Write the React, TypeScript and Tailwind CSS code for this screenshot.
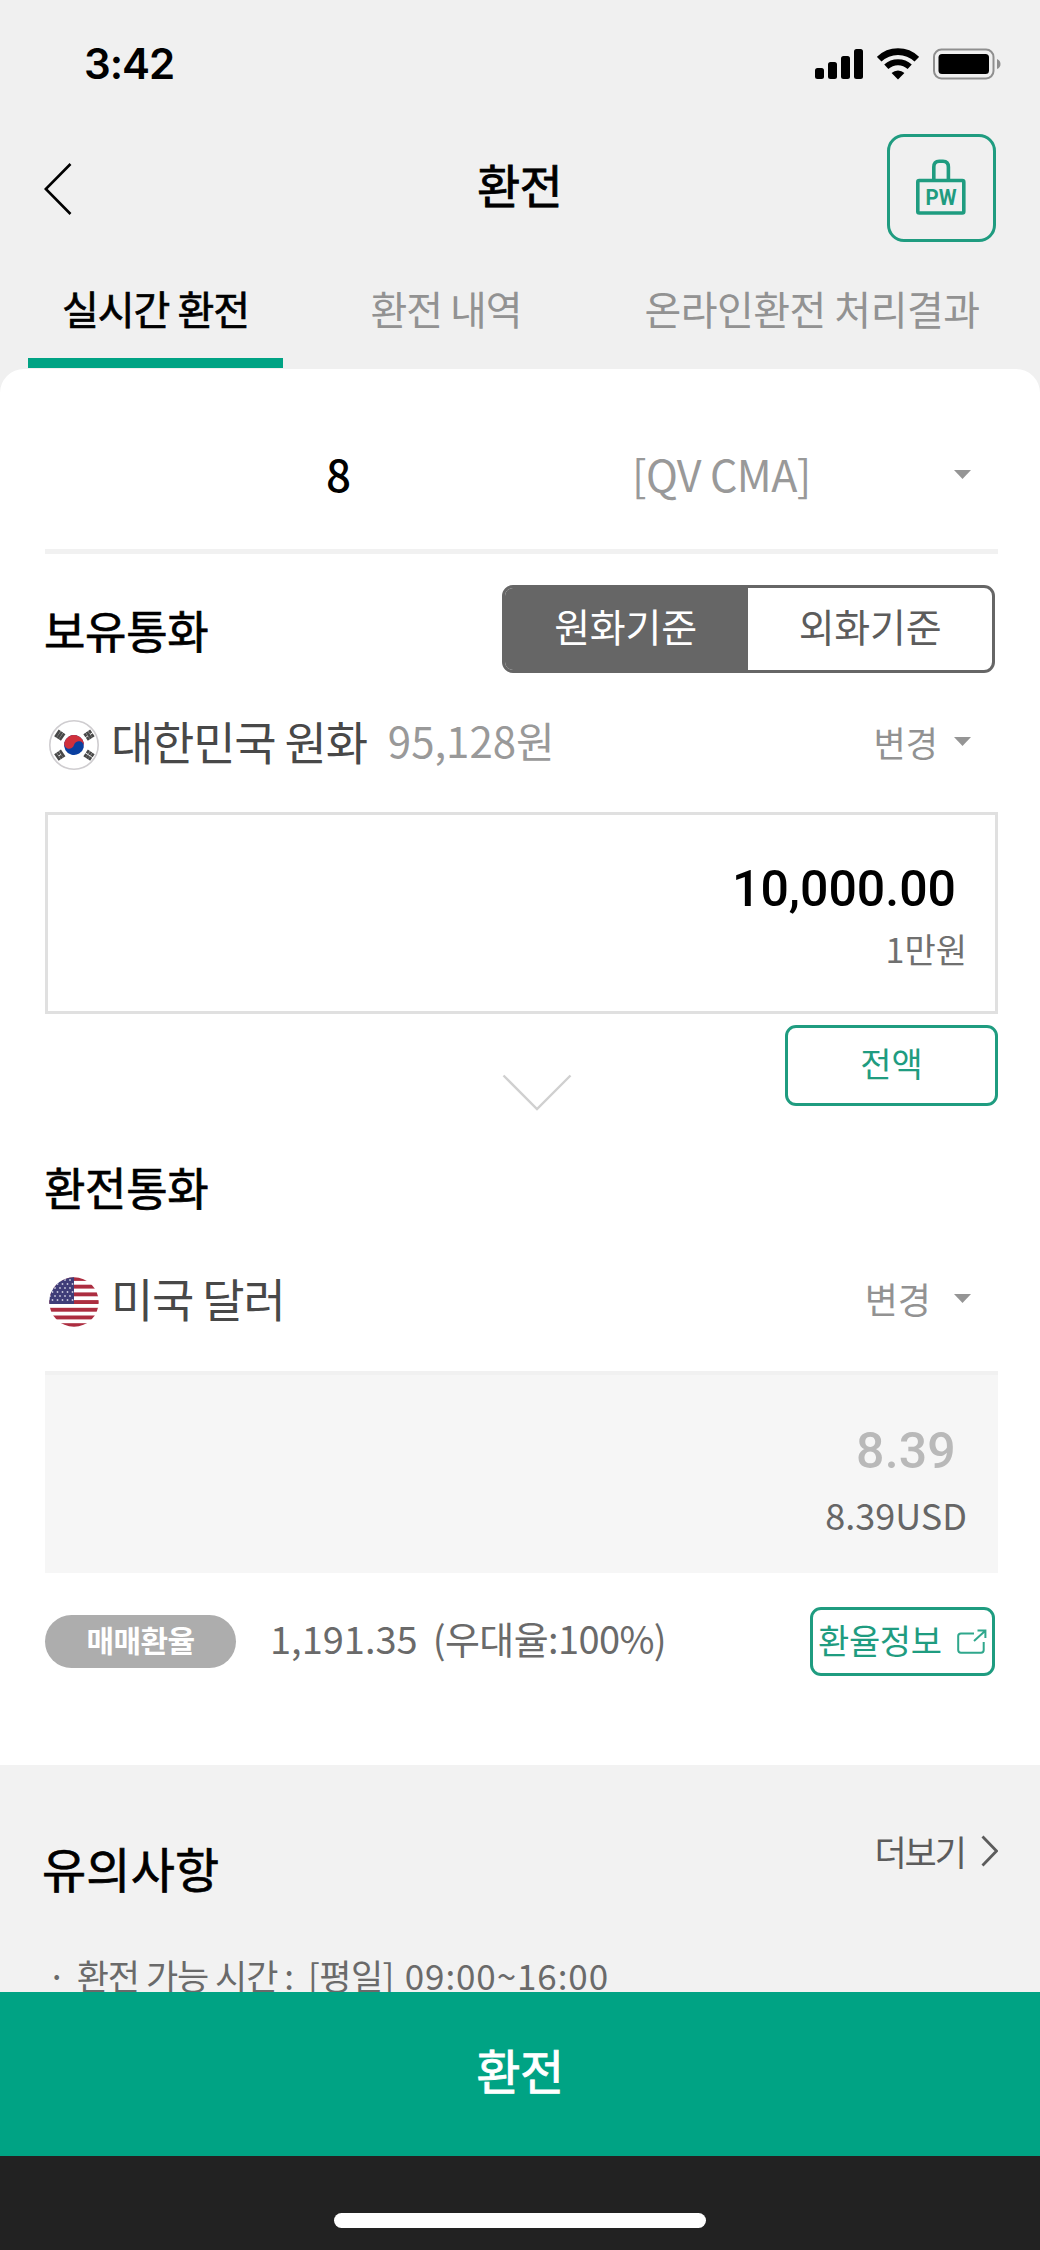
import React from "react";

const SignalIcon: React.FC = () => (
  <svg width="48" height="32" viewBox="0 0 48 32" fill="#000">
    <rect x="0" y="20" width="9" height="11" rx="2.5" />
    <rect x="13" y="14" width="9" height="17" rx="2.5" />
    <rect x="26" y="8" width="9" height="23" rx="2.5" />
    <rect x="39" y="1" width="9" height="30" rx="2.5" />
  </svg>
);

const WifiIcon: React.FC = () => (
  <svg width="42" height="32" viewBox="0 0 42 32" fill="none" stroke="#000">
    <path d="M2.2 11.2 A27 27 0 0 1 39.8 11.2" strokeWidth="6.6" />
    <path d="M9.3 18.8 A17 17 0 0 1 32.7 18.8" strokeWidth="6" />
    <path d="M21 31.5 L14.6 25 A9.2 9.2 0 0 1 27.4 25 Z" fill="#000" stroke="none" />
  </svg>
);

const BatteryIcon: React.FC = () => (
  <svg width="68" height="32" viewBox="0 0 68 32" fill="none">
    <rect x="1" y="1.5" width="59.5" height="29" rx="7.5" stroke="#8f8f8f" strokeWidth="2" />
    <rect x="5.5" y="6" width="50.5" height="20" rx="3.5" fill="#000" />
    <path d="M64 11 Q67.5 12.5 67.5 16 Q67.5 19.5 64 21 Z" fill="#8f8f8f" />
  </svg>
);

const PasswordIcon: React.FC = () => (
  <svg className="-mt-[3px]" width="50" height="56" viewBox="0 0 50 56" fill="none" stroke="#1f9c80" strokeWidth="3.6">
    <path d="M17.8 21 V8 Q17.8 2.2 23.2 2.2 H27 Q32.4 2.2 32.4 8 V21" />
    <rect x="1.8" y="21.5" width="46" height="32.5" rx="1.5" />
    <text
      x="25"
      y="45.5"
      textAnchor="middle"
      fill="#1f9c80"
      stroke="none"
      fontFamily="Roboto, sans-serif"
      fontWeight="700"
      fontSize="22"
      textLength="31"
      lengthAdjust="spacingAndGlyphs"
    >
      PW
    </text>
  </svg>
);

const Caret: React.FC = () => (
  <svg width="17" height="9" viewBox="0 0 17 9" fill="#959595">
    <path d="M0 0 H17 L8.5 9 Z" />
  </svg>
);

const KoreaFlag: React.FC = () => (
  <svg width="50" height="50" viewBox="0 0 50 50">
    <circle cx="25" cy="25" r="24.2" fill="#fff" stroke="#cfcdd0" strokeWidth="1.6" />
    <g transform="rotate(14 25 25)">
      <circle cx="25" cy="25" r="10" fill="#0a3fa0" />
      <path d="M15 25 A10 10 0 0 1 35 25 A5 5 0 0 0 25 25 A5 5 0 0 1 15 25 Z" fill="#d0303c" />
    </g>
    <g stroke="#484848" strokeWidth="2.6">
      <g transform="translate(10.8 15.2) rotate(-56)">
        <path d="M-4 -2.8 H4 M-4 0 H4 M-4 2.8 H4" />
      </g>
      <g transform="translate(40 15.2) rotate(56)">
        <path d="M-4 -2.8 H-.4 M.4 -2.8 H4 M-4 0 H4 M-4 2.8 H-.4 M.4 2.8 H4" />
      </g>
      <g transform="translate(10.8 35.2) rotate(56)">
        <path d="M-4 -2.8 H4 M-4 0 H-.4 M.4 0 H4 M-4 2.8 H4" />
      </g>
      <g transform="translate(40 35.2) rotate(-56)">
        <path d="M-4 -2.8 H-.4 M.4 -2.8 H4 M-4 0 H-.4 M.4 0 H4 M-4 2.8 H-.4 M.4 2.8 H4" />
      </g>
    </g>
  </svg>
);

const stripes = [0, 1, 2, 3, 4, 5, 6];
const starRows = [3, 7, 11, 15, 19, 23];

const UsaFlag: React.FC = () => (
  <svg width="50" height="50" viewBox="0 0 50 50">
    <defs>
      <clipPath id="usa-circle">
        <circle cx="25" cy="25" r="24.7" />
      </clipPath>
    </defs>
    <g clipPath="url(#usa-circle)">
      <rect width="50" height="50" fill="#fff" />
      {stripes.map((i) => (
        <rect key={`stripe_${i}`} x="0" y={i * 7.7} width="50" height="3.9" fill="#ac2d40" />
      ))}
      <rect width="25" height="27" fill="#3f3d78" />
      {starRows.map((y, row) =>
        [2, 7, 12, 17, 22].map((x) => (
          <circle key={`star_${x}_${y}`} cx={row % 2 ? x + 1.5 : x - 1} cy={y} r="0.9" fill="#c9c8dc" />
        ))
      )}
    </g>
  </svg>
);

const ExternalIcon: React.FC = () => (
  <svg width="30" height="25" viewBox="0 0 30 25" fill="none" stroke="#2fa78c" strokeWidth="2">
    <path d="M17 4.5 H4 Q1.2 4.5 1.2 7 V21 Q1.2 23.7 4 23.7 H24 Q26.7 23.7 26.7 21 V13" />
    <path d="M17 12 L28 2 M20.5 1.6 H28.4 V9" />
  </svg>
);

interface CurrencyRowProps {
  flag: React.ReactNode;
  name: string;
  balance?: string;
  change: React.ReactNode;
}

const CurrencyRow: React.FC<CurrencyRowProps> = ({ flag, name, balance, change }: CurrencyRowProps) => {
  return (
    <div className="flex h-[50px] items-center pr-[27px] pl-[4px]">
      {flag}
      <p className="ml-[12px] -mt-2.5 text-[46px] tracking-[-1.2px] text-[#484848]">{name}</p>
      {balance && <p className="ml-[21px] -mt-2.5 text-[42px] text-[#999]">{balance}</p>}
      <div className="-mt-2 ml-auto flex items-center">{change}</div>
    </div>
  );
};

const tabs = [
  {
    label: "실시간 환전",
    style: "ml-[28px] w-[255px] border-[#00a384] text-black tracking-[-1px] [-webkit-text-stroke:0.7px]",
  },
  { label: "환전 내역", style: "ml-[63px] w-[200px] border-transparent tracking-[-1px] text-[#929292]" },
  { label: "온라인환전 처리결과", style: "ml-[86px] w-[360px] border-transparent tracking-[-0.5px] text-[#929292]" },
];

const App: React.FC = () => {
  return (
    <div className="flex h-[2250px] w-[1040px] flex-col overflow-hidden bg-[#f0f0f0] font-['Noto_Sans_CJK_KR',sans-serif] leading-none whitespace-nowrap">
      <header>
        <div className="flex h-[128px] items-center pr-[39px] pl-[84px]">
          <p className="font-['Inter',sans-serif] text-[42px] font-semibold tracking-[-1px]">3:42</p>
          <div className="ml-auto flex items-center">
            <SignalIcon />
            <div className="ml-[14px]">
              <WifiIcon />
            </div>
            <div className="ml-[14px]">
              <BatteryIcon />
            </div>
          </div>
        </div>

        <div className="mt-[6px] flex h-[108px] items-center justify-between pr-[44px] pl-[44px]">
          <svg className="mt-[2px]" width="108" height="54" viewBox="0 0 108 54" fill="none" stroke="#000" strokeWidth="2.6">
            <path d="M26.5 2 L1.8 27 L26.5 52" />
          </svg>
          <h1 className="-mt-2.5 text-[47px] tracking-[-0.8px] [-webkit-text-stroke:0.8px]">환전</h1>
          <button className="flex h-[108px] w-[109px] items-center justify-center rounded-[17px] border-3 border-[#1f9c80]">
            <PasswordIcon />
          </button>
        </div>

        <nav className="flex h-[127px] pt-[46px]">
          {tabs.map((tab) => (
            <div
              key={`tab_${tab.label}`}
              className={`flex h-[80px] shrink-0 justify-center border-b-10 text-[40px] ${tab.style}`}
            >
              {tab.label}
            </div>
          ))}
        </nav>
      </header>

      <main className="h-[1396px] shrink-0 rounded-t-[24px] bg-white pr-[42px] pl-[45px]">
        <div className="flex h-[185px] items-center border-b-5 border-[#f1f1f1] pt-[28px] pr-[27px]">
          <p className="ml-[281px] text-[44px] font-medium">8</p>
          <p className="ml-[281px] text-[43px] tracking-[-0.6px] text-[#999]">[QV CMA]</p>
          <div className="mt-[3px] ml-auto">
            <Caret />
          </div>
        </div>

        <div className="mt-[31px] flex h-[88px] items-center justify-between pr-[3px]">
          <h2 className="-ml-px text-[45px] tracking-[-0.3px] [-webkit-text-stroke:0.7px]">보유통화</h2>
          <div className="flex h-[88px] w-[493px] overflow-hidden rounded-[11px] border-3 border-[#666] text-[39px] tracking-[-0.2px]">
            <div className="flex w-[243px] items-center justify-center bg-[#666] pr-[2px] pb-2 text-white">원화기준</div>
            <div className="flex flex-1 items-center justify-center pb-2 text-[#5c5c5c]">외화기준</div>
          </div>
        </div>

        <div className="mt-[47px]">
          <CurrencyRow
            flag={<KoreaFlag />}
            name="대한민국 원화"
            balance="95,128원"
            change={
              <>
                <p className="mr-[16px] text-[35px] text-[#929292]">변경</p>
                <Caret />
              </>
            }
          />
        </div>

        <div className="mt-[42px] flex h-[202px] flex-col items-end border-3 border-[#e0e0e0] pt-[49px]">
          <p className="mr-[39px] font-['Roboto',sans-serif] text-[50px] font-medium">10,000.00</p>
          <p className="mt-[18px] mr-[28px] text-[34px] text-[#707070]">1만원</p>
        </div>

        <div className="mt-[11px] flex h-[81px] items-start">
          <svg className="mt-[49px] ml-[457px]" width="70" height="38" viewBox="0 0 70 38" fill="none" stroke="#d0d0d0" strokeWidth="2.4">
            <path d="M1.5 1.5 L35 35 L68.5 1.5" />
          </svg>
          <button className="ml-auto h-[81px] w-[213px] rounded-[11px] border-3 border-[#1f9c80] pb-1.5 text-[34px] text-[#1f9c80]">
            전액
          </button>
        </div>

        <h2 className="mt-[58px] -ml-px text-[45px] tracking-[-0.3px] [-webkit-text-stroke:0.7px]">환전통화</h2>

        <div className="mt-[68px]">
          <CurrencyRow
            flag={<UsaFlag />}
            name="미국 달러"
            change={
              <>
                <p className="mr-[23px] text-[36px] text-[#929292]">변경</p>
                <Caret />
              </>
            }
          />
        </div>

        <div className="mt-[44px] flex h-[202px] flex-col items-end border-t-4 border-[#f1f1f1] bg-[#f6f6f6] pt-[51px]">
          <p className="mr-[42px] font-['Roboto',sans-serif] text-[50px] font-medium tracking-[0.2px] text-[#b9b9b9]">8.39</p>
          <p className="mt-[20px] mr-[31px] text-[36px] text-[#666]">8.39USD</p>
        </div>

        <div className="mt-[34px] flex h-[69px] items-center pr-[3px]">
          <div className="flex h-[53px] w-[191px] items-center justify-center rounded-full bg-[#adadad] pb-1.5 text-[30px] font-bold tracking-[-0.6px] text-white">
            매매환율
          </div>
          <p className="ml-[34px] -mt-2 text-[38px] text-[#6a6a6a]">1,191.35</p>
          <p className="ml-[15px] -mt-2 text-[38px] tracking-[-0.6px] text-[#6a6a6a]">(우대율:100%)</p>
          <button className="ml-auto flex h-[69px] w-[185px] items-center rounded-[11px] border-3 border-[#1f9c80] pl-[5px] text-[34px] tracking-[-0.4px] text-[#1f9c80]">
            <span className="-mt-1">환율정보</span>
            <span className="ml-[15px]">
              <ExternalIcon />
            </span>
          </button>
        </div>
      </main>

      <section className="h-[227px] shrink-0 overflow-hidden bg-[#f2f2f2] pr-[42px] pl-[42px]">
        <div className="flex items-start justify-between pt-[68px]">
          <h2 className="mt-[10px] text-[48px] tracking-[0.2px] [-webkit-text-stroke:0.7px]">유의사항</h2>
          <div className="flex items-center text-[35px] tracking-[-2px] text-[#5c5c5c]">
            더보기
            <svg className="ml-[16px]" width="17" height="32" viewBox="0 0 17 32" fill="none" stroke="#5c5c5c" strokeWidth="2.8">
              <path d="M1.5 1.5 L15.5 16 L1.5 30.5" />
            </svg>
          </div>
        </div>
        <div className="mt-[66px] ml-[5px] flex text-[35px] text-[#6a6a6a]">
          <p>·</p>
          <p className="ml-[10px] tracking-[-1px]">환전 가능 시간 :</p>
          <p className="ml-[15px] tracking-[-0.6px]">[평일]</p>
          <p className="ml-[11px] tracking-[0.9px]">09:00~16:00</p>
        </div>
      </section>

      <button className="h-[164px] shrink-0 bg-[#00a384] pb-2.5 text-[48px] tracking-[-0.4px] text-white [-webkit-text-stroke:0.8px]">
        환전
      </button>

      <footer className="flex flex-1 justify-center bg-[#222] pt-[57px]">
        <div className="h-[15px] w-[372px] rounded-full bg-white" />
      </footer>
    </div>
  );
};

export default App;
